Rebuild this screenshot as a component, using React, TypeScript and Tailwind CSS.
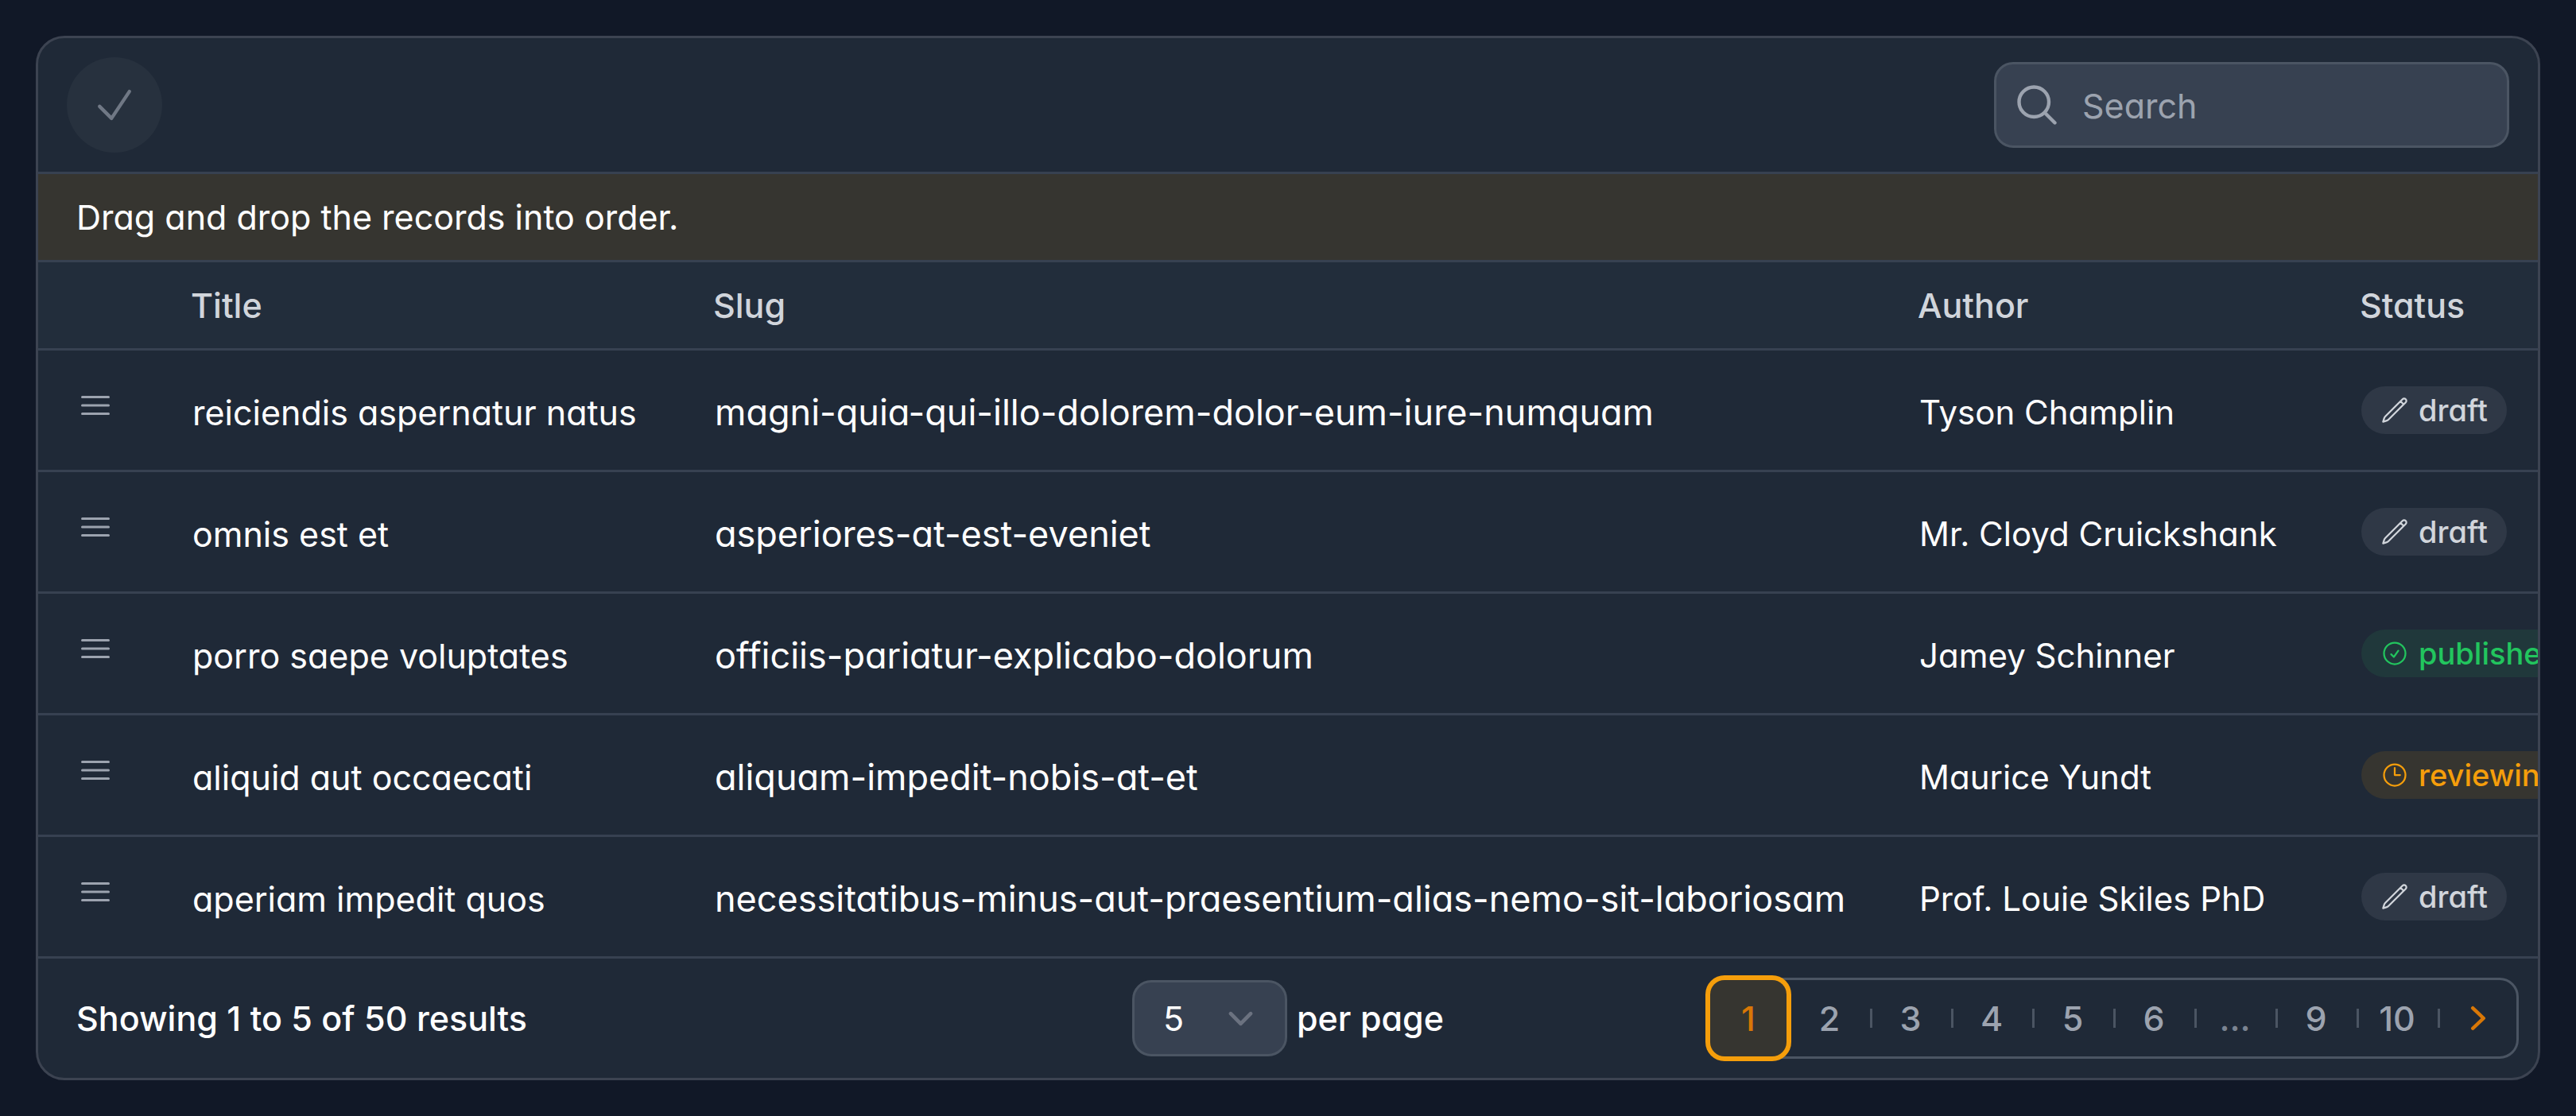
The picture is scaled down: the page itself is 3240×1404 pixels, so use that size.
import React from "react";

type Status = "draft" | "published" | "reviewing";

interface Post {
  title: string;
  slug: string;
  author: string;
  status: Status;
}

const posts: Post[] = [
  {
    title: "reiciendis aspernatur natus",
    slug: "magni-quia-qui-illo-dolorem-dolor-eum-iure-numquam",
    author: "Tyson Champlin",
    status: "draft",
  },
  {
    title: "omnis est et",
    slug: "asperiores-at-est-eveniet",
    author: "Mr. Cloyd Cruickshank",
    status: "draft",
  },
  {
    title: "porro saepe voluptates",
    slug: "officiis-pariatur-explicabo-dolorum",
    author: "Jamey Schinner",
    status: "published",
  },
  {
    title: "aliquid aut occaecati",
    slug: "aliquam-impedit-nobis-at-et",
    author: "Maurice Yundt",
    status: "reviewing",
  },
  {
    title: "aperiam impedit quos",
    slug: "necessitatibus-minus-aut-praesentium-alias-nemo-sit-laboriosam",
    author: "Prof. Louie Skiles PhD",
    status: "draft",
  },
];

const pages = ["2", "3", "4", "5", "6", "...", "9", "10"];

function OutlineIcon({
  d,
  className,
  strokeWidth = 1.5,
}: {
  d: string;
  className: string;
  strokeWidth?: number;
}) {
  return (
    <svg
      className={className}
      viewBox="0 0 24 24"
      fill="none"
      stroke="currentColor"
      strokeWidth={strokeWidth}
      strokeLinecap="round"
      strokeLinejoin="round"
      aria-hidden="true"
    >
      <path d={d} />
    </svg>
  );
}

const icons = {
  check: "M4.5 12.75l6 6 9-13.5",
  search:
    "M21 21l-5.197-5.197m0 0A7.5 7.5 0 105.196 5.196a7.5 7.5 0 0010.607 10.607z",
  bars: "M3.75 6.75h16.5M3.75 12h16.5m-16.5 5.25h16.5",
  draft:
    "M16.862 4.487l1.687-1.688a1.875 1.875 0 112.652 2.652L6.832 19.82a4.5 4.5 0 01-1.897 1.13l-2.685.8.8-2.685a4.5 4.5 0 011.13-1.897L16.863 4.487zm0 0L19.5 7.125",
  published: "M9 12.75L11.25 15 15 9.75M21 12a9 9 0 11-18 0 9 9 0 0118 0z",
  reviewing: "M12 6v6h4.5m4.5 0a9 9 0 11-18 0 9 9 0 0118 0z",
};

const badgeColors: Record<Status, string> = {
  draft: "bg-[#2f3846] text-[#d1d5db]",
  published: "bg-[#20383b] text-[#22c55e]",
  reviewing: "bg-[#363530] text-[#f59e0b]",
};

function Badge({ status }: { status: Status }) {
  return (
    <span
      className={`inline-flex h-[60px] items-center gap-3 rounded-full px-6 text-[38px] leading-[60px] font-medium ${badgeColors[status]}`}
    >
      <OutlineIcon d={icons[status]} className="size-9 shrink-0" />
      {status}
    </span>
  );
}

function Divider({ hidden = false }: { hidden?: boolean }) {
  return (
    <span
      className={`ml-[3px] h-6 w-[3px] shrink-0 ${hidden ? "" : "bg-[#4b5563]"}`}
    />
  );
}

function Pagination() {
  return (
    <nav
      aria-label="Pagination"
      className="flex items-center justify-self-end rounded-[24px] border-[3px] border-[#4b5563] font-medium text-[#9ca3af]"
    >
      <button
        type="button"
        aria-current="page"
        className="size-24 shrink-0 rounded-[18px] bg-[#363530] text-[#d97706] ring-6 ring-[#f59e0b]"
      >
        1
      </button>
      {pages.map((page, index) => (
        <React.Fragment key={page}>
          <Divider hidden={index === 0} />
          {page === "..." ? (
            <span className="flex size-24 shrink-0 items-center justify-center text-[#7b8492]">
              ...
            </span>
          ) : (
            <button type="button" className="size-24 shrink-0">
              {page}
            </button>
          )}
        </React.Fragment>
      ))}
      <Divider />
      <button
        type="button"
        aria-label="Next page"
        className="flex size-24 shrink-0 items-center justify-center text-[#d97706]"
      >
        <svg className="size-15" viewBox="0 0 20 20" fill="currentColor" aria-hidden="true">
          <path d="M7.21 14.77a.75.75 0 01.02-1.06L11.168 10 7.23 6.29a.75.75 0 111.04-1.08l4.5 4.25a.75.75 0 010 1.08l-4.5 4.25a.75.75 0 01-1.06-.02z" />
        </svg>
      </button>
    </nav>
  );
}

export default function App() {
  return (
    <main className="min-h-screen bg-[#111827] p-[45px] font-['Inter','Liberation_Sans',sans-serif] text-[43px] leading-[60px] text-white [font-feature-settings:'cv11']">
      <section className="overflow-hidden rounded-[36px] border-[3px] border-[#3c4351] bg-[#1f2937]">
        <header className="flex items-center justify-between border-b-[3px] border-[#374151] px-9 py-6">
          <button
            type="button"
            aria-label="Finish reordering"
            className="flex size-30 items-center justify-center rounded-full bg-[#27313e] text-[#707885]"
          >
            <OutlineIcon d={icons.check} className="size-15" strokeWidth={1.75} />
          </button>
          <label className="flex h-[108px] w-[648px] items-center gap-[27px] rounded-[24px] border-[3px] border-[#4b5563] bg-[#374151] pr-6 pl-[21px] text-[#9ca3af]">
            <OutlineIcon d={icons.search} className="size-15 shrink-0" strokeWidth={1.75} />
            <input
              type="search"
              aria-label="Search"
              placeholder="Search"
              className="w-full min-w-0 bg-transparent pt-[2px] text-white outline-none placeholder:text-[#9ca3af]"
            />
          </label>
        </header>

        <p className="border-b-[3px] border-[#374151] bg-[#363530] px-12 py-6">
          Drag and drop the records into order.
        </p>

        <div className="overflow-hidden">
          <table className="w-full min-w-[3300px] table-fixed text-left whitespace-nowrap">
            <colgroup>
              <col className="w-[144px]" />
              <col className="w-[657px]" />
              <col className="w-[1515px]" />
              <col className="w-[556px]" />
              <col />
            </colgroup>
            <thead>
              <tr className="border-b-[3px] border-[#374151] bg-[#222d3b] text-[#d1d5db]">
                <th aria-label="Reorder" />
                <th className="px-12 py-6 font-medium">Title</th>
                <th className="px-12 py-6 font-medium">Slug</th>
                <th className="px-12 py-6 font-medium">Author</th>
                <th className="px-12 py-6 font-medium">Status</th>
              </tr>
            </thead>
            <tbody>
              {posts.map((post) => (
                <tr key={post.slug} className="h-[153px] border-b-[3px] border-[#374151]">
                  <td className="px-12 pb-3">
                    <button
                      type="button"
                      aria-label={`Reorder ${post.title}`}
                      className="block text-[#9ca3af]"
                    >
                      <OutlineIcon d={icons.bars} className="size-12" />
                    </button>
                  </td>
                  <td className="px-[50px] pt-[6px]">{post.title}</td>
                  <td className="px-[50px] pt-[6px] text-[45px]">{post.slug}</td>
                  <td className="px-[50px] pt-[6px] text-[42px]">{post.author}</td>
                  <td className="px-[50px]">
                    <div className="flex">
                      <Badge status={post.status} />
                    </div>
                  </td>
                </tr>
              ))}
            </tbody>
          </table>
        </div>

        <footer className="grid grid-cols-[1fr_auto_1fr] items-center px-6 py-6">
          <p className="pl-6 font-medium">Showing 1 to 5 of 50 results</p>
          <label className="flex items-center gap-3 font-medium">
            <span className="relative flex items-center">
              <select
                defaultValue="5"
                aria-label="Records per page"
                className="h-24 w-[195px] appearance-none rounded-[24px] border-[3px] border-[#4b5563] bg-[#374151] pl-9 font-normal text-white outline-none"
              >
                <option>5</option>
                <option>10</option>
                <option>25</option>
                <option>50</option>
              </select>
              <svg
                className="pointer-events-none absolute right-[27px] size-[63px] text-[#6b7280]"
                viewBox="0 0 20 20"
                fill="none"
                stroke="currentColor"
                strokeWidth={1.5}
                strokeLinecap="round"
                strokeLinejoin="round"
                aria-hidden="true"
              >
                <path d="M6 8l4 4 4-4" />
              </svg>
            </span>
            per page
          </label>
          <Pagination />
        </footer>
      </section>
    </main>
  );
}
